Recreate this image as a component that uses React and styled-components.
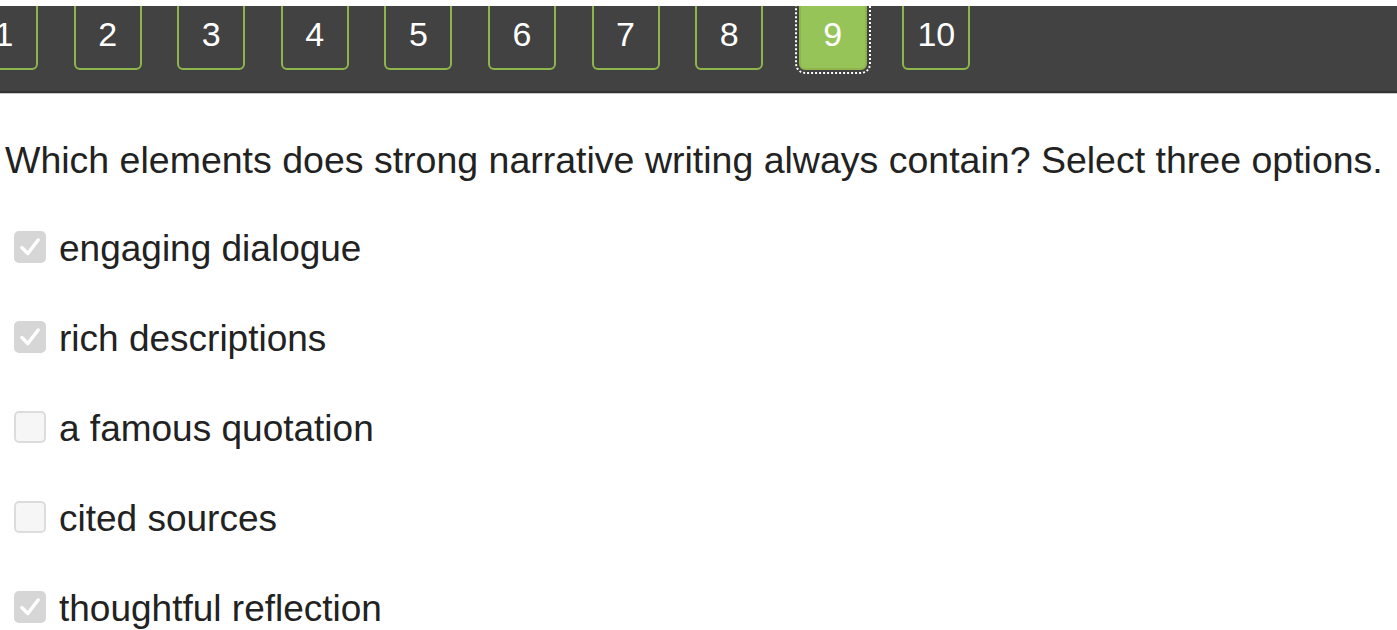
import React from 'react'
import styled, { createGlobalStyle } from 'styled-components'

const Global = createGlobalStyle`
    html, body {
        margin: 0;
        padding: 0;
        background: #fff;
        font-family: "Liberation Sans", Arial, sans-serif;
    }
`

const pages = [1, 2, 3, 4, 5, 6, 7, 8, 9, 10]
const current = 9

const options = [
    { label: 'engaging dialogue', checked: true },
    { label: 'rich descriptions', checked: true },
    { label: 'a famous quotation', checked: false },
    { label: 'cited sources', checked: false },
    { label: 'thoughtful reflection', checked: true },
]

const App = () => {
    return (
        <Page>
            <Global />
            <NavBar>
                <PageRow>
                    {pages.map((n) => (
                        <PageButton key={n} $active={n === current}>{n}</PageButton>
                    ))}
                </PageRow>
            </NavBar>
            <Question>Which elements does strong narrative writing always contain? Select three options.</Question>
            <Options>
                {options.map((opt, index) => (
                    <Option key={index}>
                        <Box $checked={opt.checked}>
                            {opt.checked && (
                                <svg width="26" height="26" viewBox="0 0 24 24">
                                    <path d="M4.5 12.5 L10 18 L19.5 5.5" fill="none" stroke="#fff" strokeWidth="3.2" strokeLinecap="round" strokeLinejoin="round" />
                                </svg>
                            )}
                        </Box>
                        <Label>{opt.label}</Label>
                    </Option>
                ))}
            </Options>
        </Page>
    )
}

export default App

const Page = styled.div`
    padding-top: 6px;
    color: #222;
`

const NavBar = styled.div`
    height: 87px;
    background: #424242;
    border-bottom: 2px solid #333;
    box-shadow: 0 1px 0 #c8c8c8;
    overflow: hidden;
    display: flex;
    align-items: flex-end;
    padding-bottom: 21px;
    box-sizing: border-box;
`

const PageRow = styled.div`
    display: flex;
    gap: 35.6px;
    margin-left: -30px;
`

const PageButton = styled.div`
    width: 68px;
    height: 76px;
    box-sizing: border-box;
    border: 2px solid #8db54c;
    border-radius: 6px;
    background: ${(p) => (p.$active ? '#97c459' : 'transparent')};
    color: #fff;
    font-size: 34px;
    line-height: 1;
    display: flex;
    align-items: flex-end;
    justify-content: center;
    padding-bottom: 17px;
    flex-shrink: 0;
    outline: ${(p) => (p.$active ? '2px dotted #fff' : 'none')};
    outline-offset: 2px;
`

const Question = styled.p`
    margin: 0;
    padding: 45px 0 0 5px;
    font-size: 37.5px;
    line-height: 44px;
    white-space: nowrap;
`

const Options = styled.div`
    display: flex;
    flex-direction: column;
    gap: 46px;
    padding: 45px 0 0 14px;
`

const Option = styled.label`
    display: flex;
    align-items: center;
    gap: 13px;
    height: 44px;
`

const Box = styled.span`
    width: 32px;
    height: 32px;
    margin-top: -4px;
    box-sizing: border-box;
    border-radius: 5px;
    display: flex;
    align-items: center;
    justify-content: center;
    background: ${(p) => (p.$checked ? '#d6d6d6' : '#f6f6f6')};
    border: 2px solid ${(p) => (p.$checked ? '#d6d6d6' : '#dcdcdc')};
`

const Label = styled.span`
    font-size: 37px;
    line-height: 44px;
`
